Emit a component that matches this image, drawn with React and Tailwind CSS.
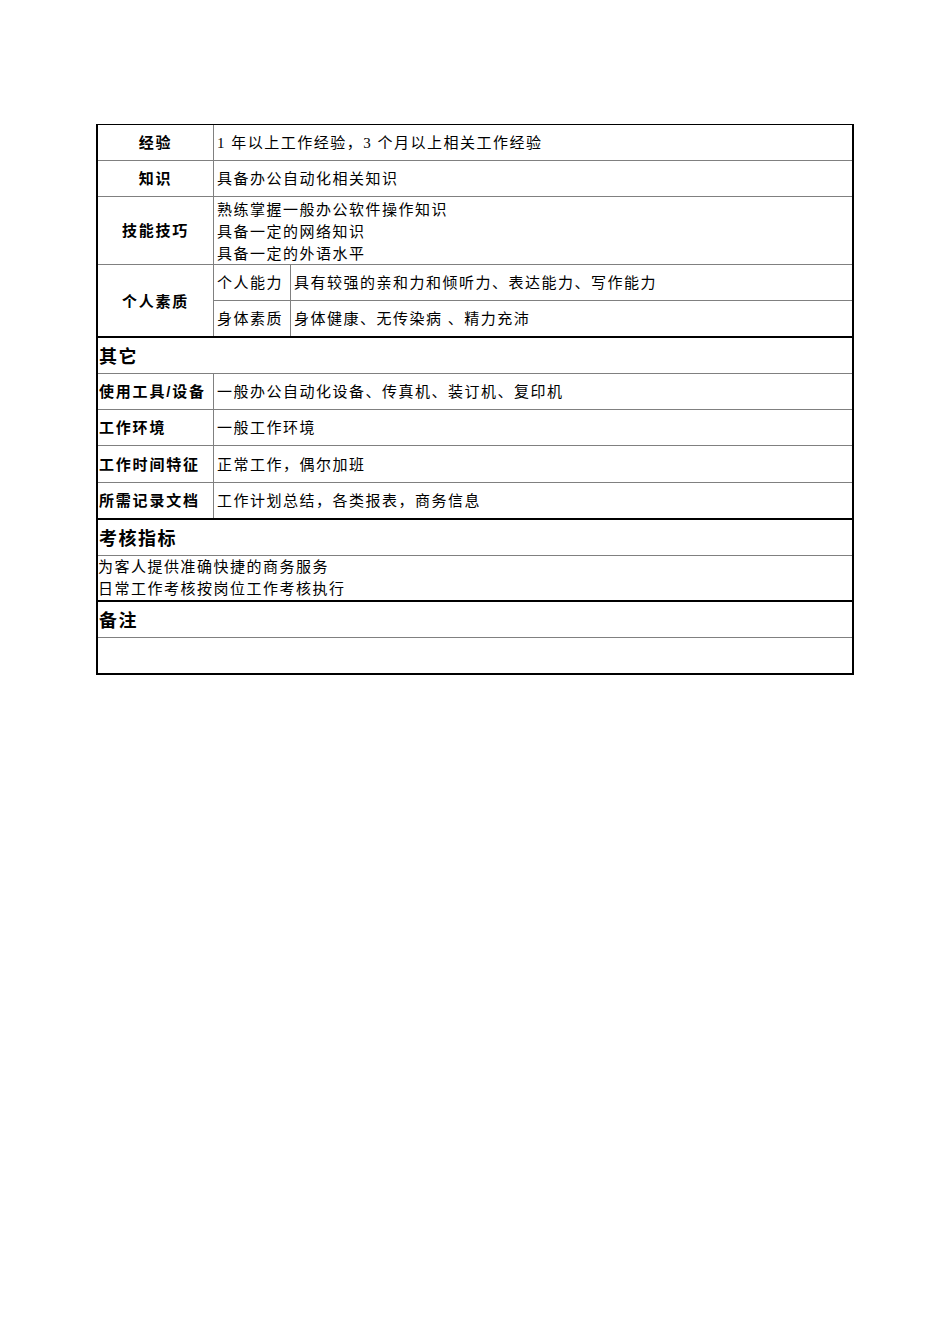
const CN = "font-['Liberation_Serif','Noto_Sans_CJK_SC',serif]";
const HEI = "font-['Liberation_Sans','Noto_Sans_CJK_SC',sans-serif] font-bold";

function LabelRow({ label, children, h, last, center }) {
  return (
    <div className={`flex ${h} pt-[2px] ${last ? "border-b-2 border-black" : "border-b border-[#808080]"}`}>
      <div
        className={`w-[116px] shrink-0 -mt-[2px] pt-[2px] border-r border-[#808080] flex items-center ${
          center ? "justify-center" : "pl-[1px]"
        } ${HEI} text-[15px] tracking-[1.8px] text-black`}
      >
        {label}
      </div>
      <div className={`flex-1 flex items-center pl-[3px] ${CN} text-[15px] tracking-[1.5px] text-black`}>
        {children}
      </div>
    </div>
  );
}

function Section({ title }) {
  return (
    <div className={`flex items-center h-[36px] pt-[3px] pl-[1px] border-b border-[#808080] ${HEI} text-[18px] tracking-[1.5px] text-black`}>
      {title}
    </div>
  );
}

export default function App() {
  return (
    <div className="min-h-[1344px] w-[950px] bg-white pt-[124px] pl-[96px]">
      <div className="w-[758px] border-t border-l-2 border-r-2 border-b-2 border-black">
        <LabelRow label="经验" h="h-[36px]" center>
          1 年以上工作经验，3 个月以上相关工作经验
        </LabelRow>
        <LabelRow label="知识" h="h-[36px]" center>
          具备办公自动化相关知识
        </LabelRow>
        <div className="flex h-[68px] border-b border-[#808080]">
          <div className={`w-[116px] shrink-0 border-r border-[#808080] flex items-center justify-center pt-[2px] ${HEI} text-[15px] tracking-[1.8px]`}>
            技能技巧
          </div>
          <div className={`flex-1 flex flex-col justify-center pt-[2px] pl-[3px] ${CN} text-[15px] tracking-[1.5px] leading-[22px]`}>
            <div>熟练掌握一般办公软件操作知识</div>
            <div>具备一定的网络知识</div>
            <div>具备一定的外语水平</div>
          </div>
        </div>
        <div className="flex h-[73px] border-b-2 border-black">
          <div className={`w-[116px] shrink-0 border-r border-[#808080] flex items-center justify-center pt-[3px] ${HEI} text-[15px] tracking-[1.8px]`}>
            个人素质
          </div>
          <div className={`flex-1 flex flex-col ${CN} text-[15px] tracking-[1.5px]`}>
            <div className="flex h-[36px] border-b border-[#808080]">
              <div className="w-[77px] shrink-0 border-r border-[#808080] flex items-center pt-[2px] pl-[3px]">个人能力</div>
              <div className="flex-1 flex items-center pt-[2px] pl-[3px]">具有较强的亲和力和倾听力、表达能力、写作能力</div>
            </div>
            <div className="flex flex-1">
              <div className="w-[77px] shrink-0 border-r border-[#808080] flex items-center pt-[2px] pl-[3px]">身体素质</div>
              <div className="flex-1 flex items-center pt-[2px] pl-[3px]">身体健康、无传染病 、精力充沛</div>
            </div>
          </div>
        </div>

        <Section title="其它" />
        <LabelRow label="使用工具/设备" h="h-[36px]">
          一般办公自动化设备、传真机、装订机、复印机
        </LabelRow>
        <LabelRow label="工作环境" h="h-[36px]">
          一般工作环境
        </LabelRow>
        <LabelRow label="工作时间特征" h="h-[37px]">
          正常工作，偶尔加班
        </LabelRow>
        <LabelRow label="所需记录文档" h="h-[37px]" last>
          工作计划总结，各类报表，商务信息
        </LabelRow>

        <Section title="考核指标" />
        <div className={`flex flex-col justify-center h-[46px] border-b-2 border-black ${CN} text-[15px] tracking-[1.5px] leading-[22px]`}>
          <div>为客人提供准确快捷的商务服务</div>
          <div>日常工作考核按岗位工作考核执行</div>
        </div>

        <Section title="备注" />
        <div className="h-[35px]" />
      </div>
    </div>
  );
}
